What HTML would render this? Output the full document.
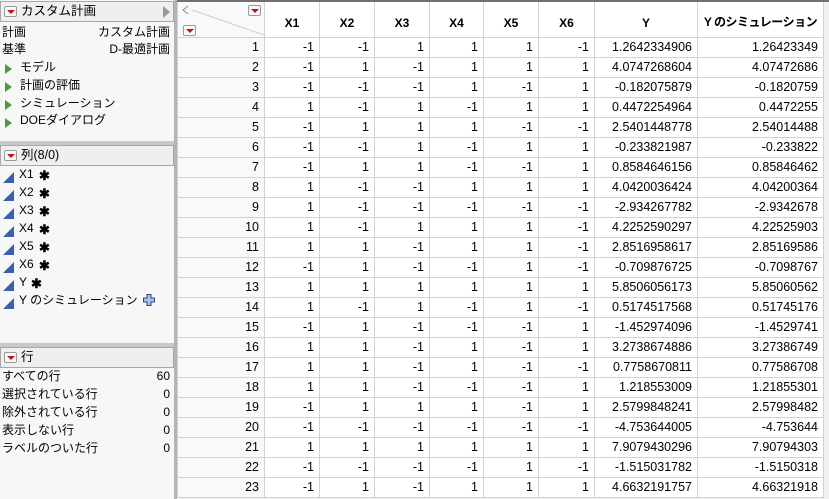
<!DOCTYPE html>
<html><head><meta charset="utf-8">
<style>
*{margin:0;padding:0;box-sizing:border-box}
html,body{width:829px;height:499px;overflow:hidden}
body{background:#f0f0f0;font-family:"Liberation Sans","Noto Sans CJK JP",sans-serif;font-size:12px;color:#000;position:relative}
#left{position:absolute;left:0;top:0;width:174px;height:499px;background:#f7f7f7}
#vdiv{position:absolute;left:174px;top:0;width:3px;height:499px;background:#b4b4b4}
.hdr{position:absolute;left:0;width:174px;height:21px;background:#efefef;border:1px solid #a8a8a8;font-size:12.5px;line-height:19px;padding-left:20px}
.btn{position:absolute;left:3px;top:4px;width:13px;height:11px;border:1px solid #9a9a9a;border-radius:2px;background:#fafafa}
.btn:after{content:"";position:absolute;left:2px;top:3px;border-left:4px solid transparent;border-right:4px solid transparent;border-top:4px solid #d01010}
.hsep{position:absolute;left:0;width:174px;height:4px;background:#c8c8c8}
.t{position:absolute;white-space:nowrap;line-height:16px}
.r{position:absolute;right:4px;white-space:nowrap;line-height:16px;text-align:right}
.tri{position:absolute;left:5px;width:0;height:0;border-top:5px solid transparent;border-bottom:5px solid transparent;border-left:7px solid #4c9a3c}
.col{position:absolute;left:3px;width:0;height:0;border-left:11px solid transparent;border-bottom:11px solid #3860b0}
.ast{position:absolute;font-size:13px;font-weight:bold;line-height:16px}
#grid{position:absolute;left:177px;top:0;width:652px;height:499px;overflow:hidden}
table{border-collapse:collapse;table-layout:fixed;position:absolute;left:0;top:0}
td,th{border:1px solid #d2d2d2;height:20px;font-size:12.5px;text-align:right;padding-right:5px;white-space:nowrap;overflow:hidden;background:#fff;font-weight:normal}
th{height:36px;font-size:12px;font-weight:bold;text-align:center;vertical-align:bottom;padding:0 0 7px 0;border-top:2px solid #707070}
td.n{background:#f9f9f9}
th.c{background:#f9f9f9}
</style></head><body>
<div id="left">
  <div class="hdr" style="top:1px">カスタム計画<span class="btn"></span><span style="position:absolute;right:3px;top:4px;border-top:6px solid transparent;border-bottom:6px solid transparent;border-left:7px solid #999"></span></div>
  <div class="t" style="left:2px;top:24px">計画</div><div class="r" style="top:24px">カスタム計画</div>
  <div class="t" style="left:2px;top:41px">基準</div><div class="r" style="top:41px">D-最適計画</div>
  <div class="tri" style="top:64px"></div><div class="t" style="left:20px;top:59px">モデル</div>
  <div class="tri" style="top:82px"></div><div class="t" style="left:20px;top:77px">計画の評価</div>
  <div class="tri" style="top:100px"></div><div class="t" style="left:20px;top:95px">シミュレーション</div>
  <div class="tri" style="top:118px"></div><div class="t" style="left:20px;top:112px">DOEダイアログ</div>
  <div class="hsep" style="top:141px"></div>
  <div class="hdr" style="top:145px">列(8/0)<span class="btn"></span></div>
  <div class="col" style="top:172px"></div><div class="t" style="left:19px;top:166px">X1</div><div class="ast" style="left:39px;top:168px">✱</div>
  <div class="col" style="top:190px"></div><div class="t" style="left:19px;top:184px">X2</div><div class="ast" style="left:39px;top:186px">✱</div>
  <div class="col" style="top:208px"></div><div class="t" style="left:19px;top:202px">X3</div><div class="ast" style="left:39px;top:204px">✱</div>
  <div class="col" style="top:226px"></div><div class="t" style="left:19px;top:220px">X4</div><div class="ast" style="left:39px;top:222px">✱</div>
  <div class="col" style="top:244px"></div><div class="t" style="left:19px;top:238px">X5</div><div class="ast" style="left:39px;top:240px">✱</div>
  <div class="col" style="top:262px"></div><div class="t" style="left:19px;top:256px">X6</div><div class="ast" style="left:39px;top:258px">✱</div>
  <div class="col" style="top:280px"></div><div class="t" style="left:19px;top:274px">Y</div><div class="ast" style="left:31px;top:276px">✱</div>
  <div class="col" style="top:298px"></div><div class="t" style="left:19px;top:292px">Y のシミュレーション</div>
  <svg style="position:absolute;left:143px;top:294px" width="12" height="12" viewBox="0 0 12 12"><path d="M4 0.5h4v3.5h3.5v4h-3.5v3.5h-4v-3.5h-3.5v-4h3.5z" fill="#aec0e0" stroke="#2a4a8a" stroke-width="1"/></svg>
  <div class="hsep" style="top:343px"></div>
  <div class="hdr" style="top:347px">行<span class="btn"></span></div>
  <div class="t" style="left:2px;top:368px">すべての行</div><div class="r" style="top:368px">60</div>
  <div class="t" style="left:2px;top:386px">選択されている行</div><div class="r" style="top:386px">0</div>
  <div class="t" style="left:2px;top:404px">除外されている行</div><div class="r" style="top:404px">0</div>
  <div class="t" style="left:2px;top:422px">表示しない行</div><div class="r" style="top:422px">0</div>
  <div class="t" style="left:2px;top:440px">ラベルのついた行</div><div class="r" style="top:440px">0</div>
</div>
<div id="vdiv"></div>
<div id="grid">
<table>
<colgroup><col style="width:87px"><col style="width:55px"><col style="width:55px"><col style="width:55px"><col style="width:54px"><col style="width:55px"><col style="width:56px"><col style="width:103px"><col style="width:126px"></colgroup>
<tr><th class="c" style="position:relative"><svg style="position:absolute;left:0;top:0" width="87" height="34"><path d="M10 4 L5 8 L10 12" fill="none" stroke="#888"/><line x1="14" y1="8" x2="86" y2="33" stroke="#ccc"/></svg><span class="btn" style="left:70px;top:3px"></span><span class="btn" style="left:5px;top:23px"></span></th><th>X1</th><th>X2</th><th>X3</th><th>X4</th><th>X5</th><th>X6</th><th>Y</th><th style="letter-spacing:-0.5px">Y のシミュレーション</th></tr>
<tr><td class="n">1</td><td>-1</td><td>-1</td><td>1</td><td>1</td><td>1</td><td>-1</td><td>1.2642334906</td><td>1.26423349</td></tr>
<tr><td class="n">2</td><td>-1</td><td>1</td><td>-1</td><td>1</td><td>1</td><td>1</td><td>4.0747268604</td><td>4.07472686</td></tr>
<tr><td class="n">3</td><td>-1</td><td>-1</td><td>-1</td><td>1</td><td>-1</td><td>1</td><td>-0.182075879</td><td>-0.1820759</td></tr>
<tr><td class="n">4</td><td>1</td><td>-1</td><td>1</td><td>-1</td><td>1</td><td>1</td><td>0.4472254964</td><td>0.4472255</td></tr>
<tr><td class="n">5</td><td>-1</td><td>1</td><td>1</td><td>1</td><td>-1</td><td>-1</td><td>2.5401448778</td><td>2.54014488</td></tr>
<tr><td class="n">6</td><td>-1</td><td>-1</td><td>1</td><td>-1</td><td>1</td><td>1</td><td>-0.233821987</td><td>-0.233822</td></tr>
<tr><td class="n">7</td><td>-1</td><td>1</td><td>1</td><td>-1</td><td>-1</td><td>1</td><td>0.8584646156</td><td>0.85846462</td></tr>
<tr><td class="n">8</td><td>1</td><td>-1</td><td>-1</td><td>1</td><td>1</td><td>1</td><td>4.0420036424</td><td>4.04200364</td></tr>
<tr><td class="n">9</td><td>1</td><td>-1</td><td>-1</td><td>-1</td><td>-1</td><td>-1</td><td>-2.934267782</td><td>-2.9342678</td></tr>
<tr><td class="n">10</td><td>1</td><td>-1</td><td>1</td><td>1</td><td>1</td><td>-1</td><td>4.2252590297</td><td>4.22525903</td></tr>
<tr><td class="n">11</td><td>1</td><td>1</td><td>-1</td><td>1</td><td>1</td><td>-1</td><td>2.8516958617</td><td>2.85169586</td></tr>
<tr><td class="n">12</td><td>-1</td><td>1</td><td>-1</td><td>-1</td><td>1</td><td>-1</td><td>-0.709876725</td><td>-0.7098767</td></tr>
<tr><td class="n">13</td><td>1</td><td>1</td><td>1</td><td>1</td><td>1</td><td>1</td><td>5.8506056173</td><td>5.85060562</td></tr>
<tr><td class="n">14</td><td>1</td><td>-1</td><td>1</td><td>-1</td><td>1</td><td>-1</td><td>0.5174517568</td><td>0.51745176</td></tr>
<tr><td class="n">15</td><td>-1</td><td>1</td><td>-1</td><td>-1</td><td>-1</td><td>1</td><td>-1.452974096</td><td>-1.4529741</td></tr>
<tr><td class="n">16</td><td>1</td><td>1</td><td>-1</td><td>1</td><td>-1</td><td>1</td><td>3.2738674886</td><td>3.27386749</td></tr>
<tr><td class="n">17</td><td>1</td><td>1</td><td>-1</td><td>1</td><td>-1</td><td>-1</td><td>0.7758670811</td><td>0.77586708</td></tr>
<tr><td class="n">18</td><td>1</td><td>1</td><td>-1</td><td>-1</td><td>-1</td><td>1</td><td>1.218553009</td><td>1.21855301</td></tr>
<tr><td class="n">19</td><td>-1</td><td>1</td><td>1</td><td>1</td><td>-1</td><td>1</td><td>2.5799848241</td><td>2.57998482</td></tr>
<tr><td class="n">20</td><td>-1</td><td>-1</td><td>-1</td><td>-1</td><td>-1</td><td>-1</td><td>-4.753644005</td><td>-4.753644</td></tr>
<tr><td class="n">21</td><td>1</td><td>1</td><td>1</td><td>1</td><td>1</td><td>1</td><td>7.9079430296</td><td>7.90794303</td></tr>
<tr><td class="n">22</td><td>-1</td><td>-1</td><td>-1</td><td>-1</td><td>1</td><td>-1</td><td>-1.515031782</td><td>-1.5150318</td></tr>
<tr><td class="n">23</td><td>-1</td><td>1</td><td>-1</td><td>1</td><td>1</td><td>1</td><td>4.6632191757</td><td>4.66321918</td></tr>
</table>
<div style="position:absolute;left:0;top:0;width:652px;height:2px;background:#707070"></div>
</div>
</body></html>
